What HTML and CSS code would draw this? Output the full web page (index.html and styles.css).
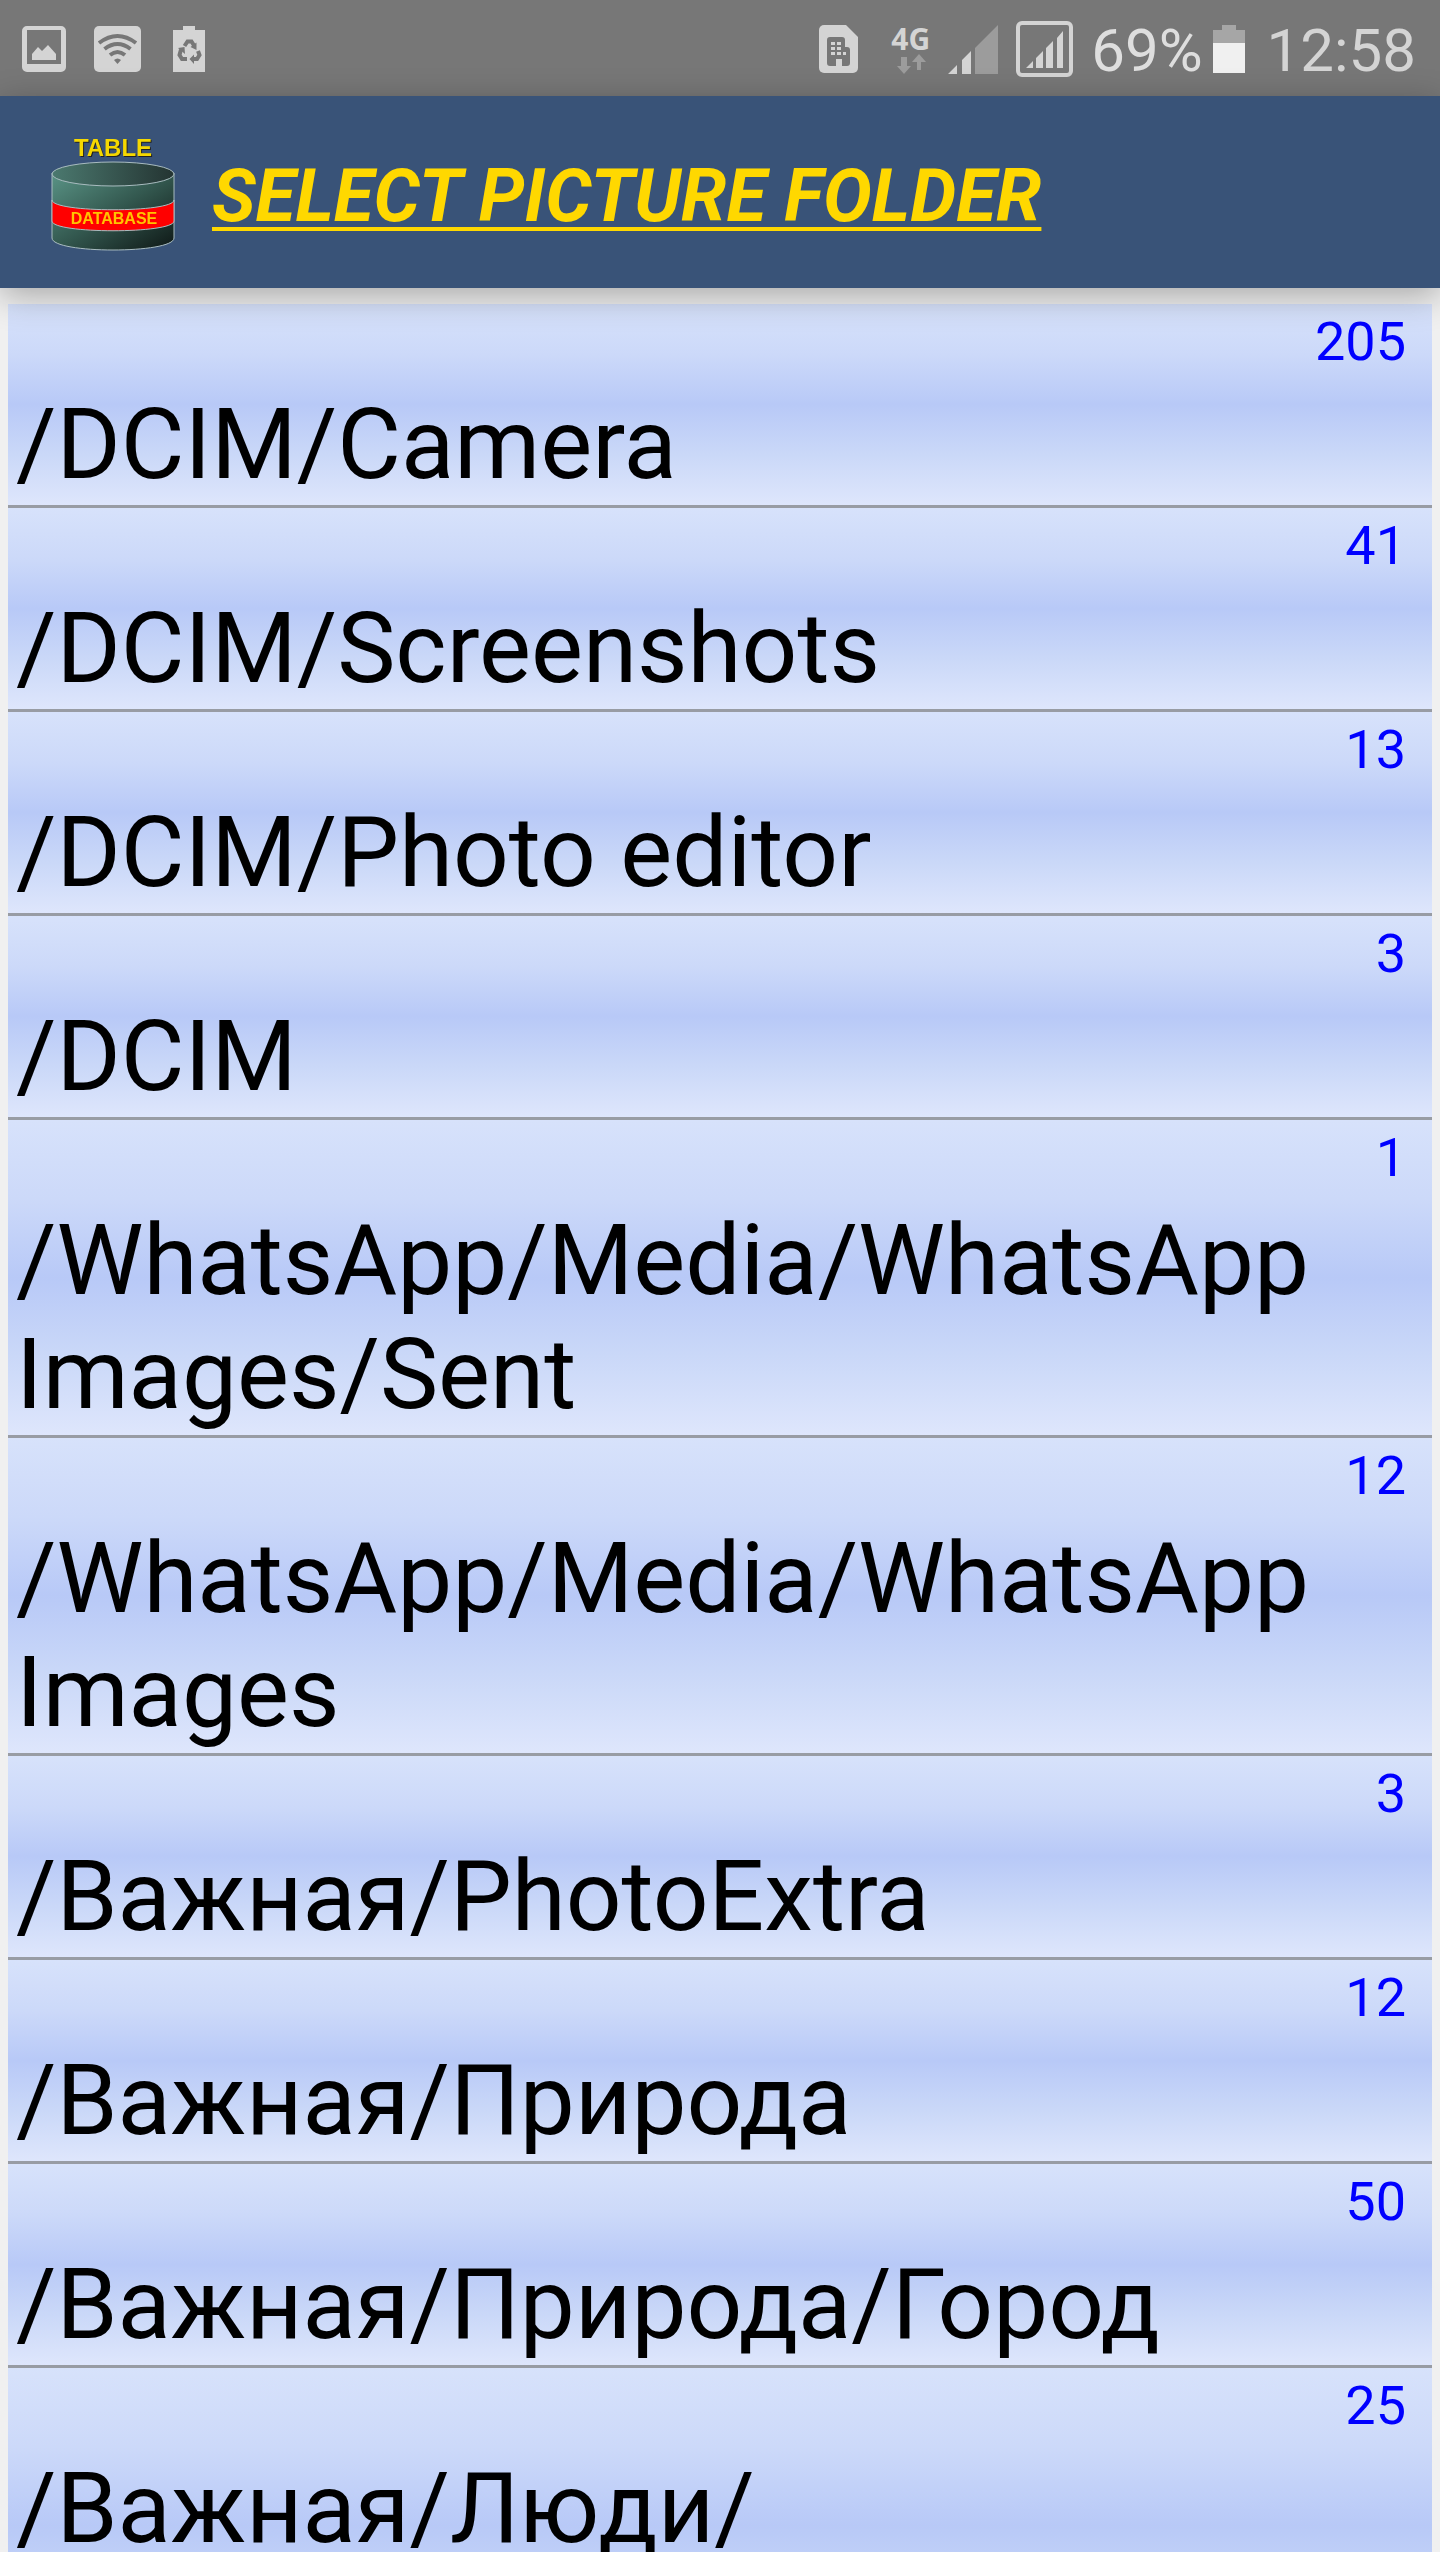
FILE: index.html
```html
<!doctype html>
<html lang="en">
<head>
<meta charset="utf-8">
<meta name="viewport" content="width=device-width, initial-scale=1">
<title>Select picture folder</title>
<link rel="stylesheet" href="styles.css">
</head>
<body>

<div class="status-bar">
  <div class="notifications">
    <svg class="icon" width="44" height="48" viewBox="0 0 44 48">
      <path fill-rule="evenodd" d="M5 1h34a5 5 0 0 1 5 5v36a5 5 0 0 1-5 5H5a5 5 0 0 1-5-5V6a5 5 0 0 1 5-5zM5 5v34h34V5z"/>
      <path d="M10 35v-6l6-7 4 4 6-6 8 9v6z"/>
    </svg>
    <svg class="icon" width="47" height="48" viewBox="0 0 47 48">
      <rect x="0" y="1" width="47" height="46" rx="5"/>
      <g class="cutout-line">
        <path d="M5 18q18.500-14 37 0"/>
        <path d="M10.500 24q13-10 26 0"/>
        <path d="M16 30q7.500-6 15 0"/>
      </g>
      <path class="cutout" d="M20 35q3.500-3 7 0l-3.500 4z"/>
    </svg>
    <svg class="icon" width="36" height="48" viewBox="-4 0 36 48">
      <path d="M0 5h10V1h12v4h10v42H0z"/>
      <g class="recycle">
        <path d="M11.500 21l3-4.500h4l2.500 4"/>
        <path d="M8 24.500L6.500 30l2.500 4h5"/>
        <path d="M25 26l1.500 4-2.500 4h-4"/>
      </g>
      <path class="cutout" d="M23.500 17.500V25l-6-3zM5 23l6.500-1 .500 7zM21 29.500V39l-4.500-5z"/>
    </svg>
  </div>

  <div class="system">
    <svg class="icon" width="40" height="48" viewBox="0 0 40 48">
      <path d="M5 0h22l12 12v31a5 5 0 0 1-5 5H5a5 5 0 0 1-5-5V5a5 5 0 0 1 5-5z"/>
      <path class="cutout" d="M11 12h12a3 3 0 0 1 3 3v7h2a3 3 0 0 1 3 3v13a3 3 0 0 1-3 3h-5v-7h-6v7h-6a3 3 0 0 1-3-3V15a3 3 0 0 1 3-3z"/>
      <path d="M12 17h4v3h-4zM18 17h4v3h-4zM12 22h4v3h-4zM18 22h4v3h-4zM12 27h4v3h-4zM18 27h4v3h-4zM24 27h3v3h-3z"/>
    </svg>
    <div class="network">
      <span>4G</span>
      <svg class="icon dim" width="30" height="20" viewBox="0 0 30 20">
        <path d="M5 3h6v9h4l-7 8-7-8h4zM21 16V8h-5l7-8 7 8h-5v8z"/>
      </svg>
    </div>
    <svg class="icon" width="50" height="49" viewBox="0 0 50 49">
      <path d="M0 49l9-9v9zM14 49V35l9-9v23z"/>
      <path class="dim" d="M27 49V23L50 0v49z"/>
    </svg>
    <svg class="icon" width="57" height="56" viewBox="0 0 57 56">
      <rect class="frame" x="2" y="2" width="53" height="52" rx="4"/>
      <path d="M10 47l7-7v7zM20 47V37l7-7v17zM30 47V27l7-7v27zM41 47V17l6-7v37z"/>
    </svg>
    <div class="power">
      <span class="level">69%</span>
      <svg class="icon" width="32" height="48" viewBox="0 0 32 48">
        <path class="battery-empty" d="M0 18V5h9V0h14v5h9v13z"/>
        <path class="battery-full" d="M0 18h32v30H0z"/>
      </svg>
    </div>
    <time class="clock">12:58</time>
  </div>
</div>

<header class="app-bar">
  <svg class="logo" width="126" height="120" viewBox="0 0 126 120" role="img" aria-label="Table database">
    <defs>
      <linearGradient id="side" x1="0" y1="0" x2="1" y2="1">
        <stop offset="0" stop-color="#5a9486"/>
        <stop offset=".5" stop-color="#33584f"/>
        <stop offset="1" stop-color="#0e1715"/>
      </linearGradient>
      <linearGradient id="lid" x1="0" y1="0" x2="1" y2="0">
        <stop offset="0" stop-color="#4b796f"/>
        <stop offset="1" stop-color="#243432"/>
      </linearGradient>
    </defs>
    <path class="edge" fill="url(#side)" d="M2 41v65c0 16 122 16 122 0V41z"/>
    <path class="edge" fill="#f00" d="M2 68c0 13 122 13 122 0v21c0 13-122 13-122 0z"/>
    <ellipse class="edge" fill="url(#lid)" cx="63" cy="42" rx="61" ry="12"/>
    <text class="logo-title logo-shadow" x="64" y="25">TABLE</text>
    <text class="logo-title" x="63" y="24">TABLE</text>
    <text class="logo-band" x="64" y="92">DATABASE</text>
  </svg>
  <h1>SELECT PICTURE FOLDER</h1>
</header>

<ul class="folders">
  <li><a class="folder" href="#"><span class="count">205</span><span class="name">/DCIM/Camera</span></a></li>
  <li><a class="folder" href="#"><span class="count">41</span><span class="name">/DCIM/Screenshots</span></a></li>
  <li><a class="folder" href="#"><span class="count">13</span><span class="name">/DCIM/Photo editor</span></a></li>
  <li><a class="folder" href="#"><span class="count">3</span><span class="name">/DCIM</span></a></li>
  <li><a class="folder" href="#"><span class="count">1</span><span class="name">/WhatsApp/Media/WhatsApp Images/Sent</span></a></li>
  <li><a class="folder" href="#"><span class="count">12</span><span class="name">/WhatsApp/Media/WhatsApp Images</span></a></li>
  <li><a class="folder" href="#"><span class="count">3</span><span class="name">/Важная/PhotoExtra</span></a></li>
  <li><a class="folder" href="#"><span class="count">12</span><span class="name">/Важная/Природа</span></a></li>
  <li><a class="folder" href="#"><span class="count">50</span><span class="name">/Важная/Природа/Город</span></a></li>
  <li><a class="folder two-line" href="#"><span class="count">25</span><span class="name">/Важная/Люди/</span></a></li>
</ul>

</body>
</html>
```
FILE: styles.css
```css
* {
  box-sizing: border-box;
}

body {
  display: flex;
  flex-direction: column;
  height: 100vh;
  margin: 0;
  padding-bottom: 8px;
  background: #fff;
  font-family: Roboto, "Noto Sans", sans-serif;
}

/* status bar */
.status-bar {
  display: flex;
  flex: none;
  justify-content: space-between;
  height: 96px;
  padding: 2px 24px 0 22px;
  background: #777;
  color: #d4d4d4;
}
.notifications,
.system,
.power {
  display: flex;
  align-items: center;
}
.notifications {
  gap: 28px;
}
.system {
  gap: 18px;
}
.power {
  gap: 10px;
}
.icon {
  display: block;
  flex: none;
  fill: #d4d4d4;
}
.cutout {
  fill: #777;
}
.cutout-line,
.recycle {
  fill: none;
  stroke: #777;
  stroke-width: 4;
}
.dim {
  fill: #9c9c9c;
}
.frame {
  fill: none;
  stroke: #d4d4d4;
  stroke-width: 4;
}
.battery-empty {
  fill: #a6a6a6;
}
.battery-full {
  fill: #f0f0f0;
}
.network {
  display: flex;
  flex-direction: column;
  align-items: center;
  padding-left: 14px;
  font: bold 30px/30px "Noto Sans", sans-serif;
}
.level,
.clock {
  padding-top: 4px;
  font-size: 60px;
  line-height: 72px;
}
.level {
  color: #dedede;
}
.clock {
  padding-left: 4px;
}

/* title bar */
.app-bar {
  position: relative;
  z-index: 1;
  display: flex;
  flex: none;
  align-items: center;
  gap: 36px;
  height: 192px;
  padding: 0 50px;
  background: #395378;
  box-shadow: 0 8px 32px rgba(0, 0, 0, 0.3);
}
.logo {
  flex: none;
}
.edge {
  stroke: #a9bcc0;
  stroke-width: 1;
}
.logo-title,
.logo-band {
  font-family: "Liberation Sans", Arial, sans-serif;
  font-weight: bold;
  text-anchor: middle;
}
.logo-title {
  font-size: 24px;
  fill: #f5d800;
}
.logo-shadow {
  fill: #222;
}
.logo-band {
  font-size: 16px;
  fill: #ffc400;
}
h1 {
  margin: 0;
  padding-top: 8px;
  color: #ffd800;
  font-size: 73px;
  font-style: italic;
  font-weight: bold;
  line-height: 84px;
  text-decoration: underline;
  text-decoration-thickness: 4px;
  text-underline-offset: 6px;
  text-decoration-skip-ink: none;
}

/* folder list */
.folders {
  flex: 1;
  min-height: 0;
  margin: 0;
  padding: 16px 8px 0;
  overflow-y: auto;
  scrollbar-width: none;
  background: #f0f0f0;
  list-style: none;
}
.folder {
  display: flex;
  flex-direction: column;
  gap: 14px;
  padding: 6px 8px 3px;
  border-bottom: 3px solid #989ca4;
  background: linear-gradient(#d7e2fb, #ccd9f9 25%, #b8c9f7 50%, #cad8f8 75%, #dee6fc);
  color: #000;
  text-decoration: none;
}
.two-line {
  min-height: 318px;
}
.count {
  padding-right: 18px;
  color: #00f;
  font-size: 54px;
  line-height: 64px;
  text-align: right;
}
.name {
  font-size: 98px;
  line-height: 114px;
}
```
